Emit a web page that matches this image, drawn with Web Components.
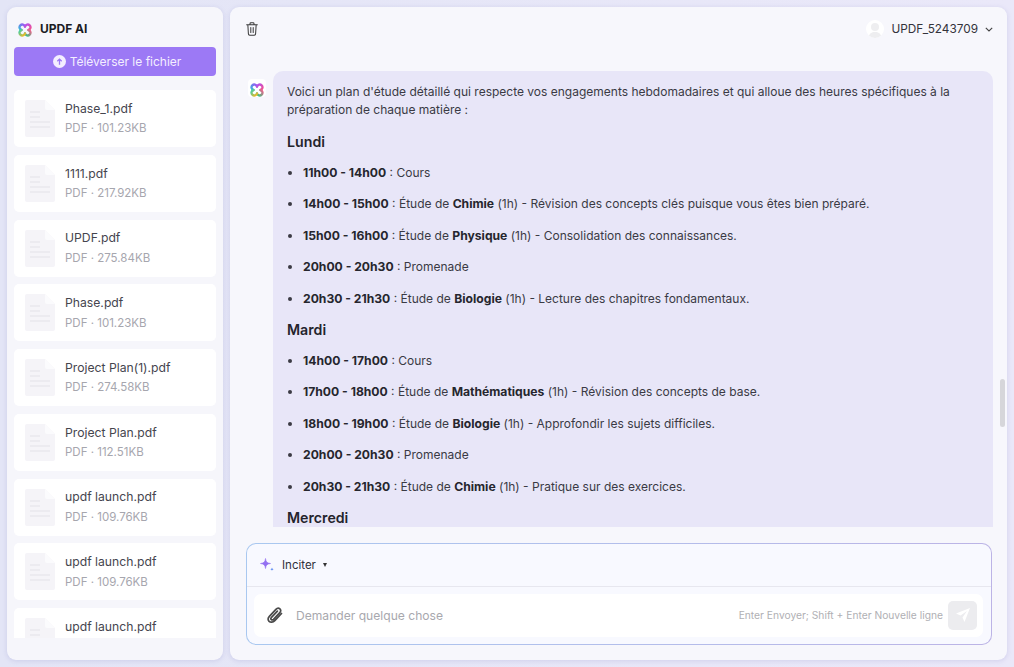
<!DOCTYPE html>
<html lang="fr">
<head>
<meta charset="utf-8">
<title>UPDF AI</title>
<style>
  html, body { margin: 0; height: 100%; }
  body {
    background: linear-gradient(90deg, #e3e5f6, #eae8f9);
    font-family: Inter, "Noto Sans", sans-serif;
    color: #222;
    overflow: hidden;
  }
</style>
</head>
<body>
<updf-app>
  <updf-sidebar slot="side">
    <file-item name="Phase_1.pdf" size="101.23KB"></file-item>
    <file-item name="1111.pdf" size="217.92KB"></file-item>
    <file-item name="UPDF.pdf" size="275.84KB"></file-item>
    <file-item name="Phase.pdf" size="101.23KB"></file-item>
    <file-item name="Project Plan(1).pdf" size="274.58KB"></file-item>
    <file-item name="Project Plan.pdf" size="112.51KB"></file-item>
    <file-item name="updf launch.pdf" size="109.76KB"></file-item>
    <file-item name="updf launch.pdf" size="109.76KB"></file-item>
    <file-item name="updf launch.pdf" size="109.76KB"></file-item>
  </updf-sidebar>
  <chat-panel slot="main">
    <chat-message>
      <p>Voici un plan d'étude détaillé qui respecte vos engagements hebdomadaires et qui alloue des heures spécifiques à la préparation de chaque matière :</p>
      <h3>Lundi</h3>
      <ul>
        <li><b>11h00 - 14h00</b> : Cours</li>
        <li><b>14h00 - 15h00</b> : Étude de <b>Chimie</b> (1h) - Révision des concepts clés puisque vous êtes bien préparé.</li>
        <li><b>15h00 - 16h00</b> : Étude de <b>Physique</b> (1h) - Consolidation des connaissances.</li>
        <li><b>20h00 - 20h30</b> : Promenade</li>
        <li><b>20h30 - 21h30</b> : Étude de <b>Biologie</b> (1h) - Lecture des chapitres fondamentaux.</li>
      </ul>
      <h3>Mardi</h3>
      <ul>
        <li><b>14h00 - 17h00</b> : Cours</li>
        <li><b>17h00 - 18h00</b> : Étude de <b>Mathématiques</b> (1h) - Révision des concepts de base.</li>
        <li><b>18h00 - 19h00</b> : Étude de <b>Biologie</b> (1h) - Approfondir les sujets difficiles.</li>
        <li><b>20h00 - 20h30</b> : Promenade</li>
        <li><b>20h30 - 21h30</b> : Étude de <b>Chimie</b> (1h) - Pratique sur des exercices.</li>
      </ul>
      <h3>Mercredi</h3>
    </chat-message>
  </chat-panel>
</updf-app>

<script>
const LOGO = `
  <svg viewBox="0 0 16 16" width="100%" height="100%" fill="none" stroke-width="2.700" stroke-linecap="round">
    <defs>
      <linearGradient id="lgA" x1="0" y1="1" x2="1" y2="0"><stop offset="0" stop-color="#35b8dc"/><stop offset="1" stop-color="#a052f5"/></linearGradient>
      <linearGradient id="lgB" x1="0" y1="0" x2="1" y2="1"><stop offset="0" stop-color="#b152f0"/><stop offset="1" stop-color="#f5508f"/></linearGradient>
      <linearGradient id="lgC" x1="1" y1="0" x2="0" y2="1"><stop offset="0" stop-color="#f2608c"/><stop offset="1" stop-color="#2fc880"/></linearGradient>
      <linearGradient id="lgD" x1="1" y1="1" x2="0" y2="0"><stop offset="0" stop-color="#f8b81e"/><stop offset="1" stop-color="#3fcfa8"/></linearGradient>
    </defs>
    <path d="M8 4A3.200 3.200 0 1 0 4 8" stroke="url(#lgA)"/>
    <path d="M12 8A3.200 3.200 0 1 0 8 4" stroke="url(#lgB)"/>
    <path d="M8 12A3.200 3.200 0 1 0 12 8" stroke="url(#lgC)"/>
    <path d="M4 8A3.200 3.200 0 1 0 8 12" stroke="url(#lgD)"/>
  </svg>`;

class UpdfApp extends HTMLElement {
  constructor() {
    super();
    this.attachShadow({ mode: 'open' });
    this.shadowRoot.innerHTML = `
      <style>
        :host {
          display: grid;
          grid-template-columns: 216px 777px;
          gap: 7px;
          padding: 7px;
          height: 667px;
          box-sizing: border-box;
        }
        ::slotted(*) { min-height: 0; }
      </style>
      <slot name="side"></slot>
      <slot name="main"></slot>
    `;
  }
}

class UpdfSidebar extends HTMLElement {
  constructor() {
    super();
    this.attachShadow({ mode: 'open' });
    this.shadowRoot.innerHTML = `
      <style>
        :host {
          display: flex;
          flex-direction: column;
          background: #f6f6fb;
          border-radius: 9px;
          box-shadow: 0 1px 5px rgba(120, 120, 190, .22);
          padding: 0 7px 22px;
          overflow: hidden;
        }
        header {
          display: flex;
          align-items: center;
          gap: 8px;
          height: 40px;
          padding: 2px 0 0 4px;
          box-sizing: border-box;
          flex: none;
        }
        .logo { width: 14px; height: 14px; }
        h1 { margin: 0; font-size: 12px; font-weight: 700; color: #1c1c24; }
        button {
          flex: none;
          height: 29px;
          border: 0;
          border-radius: 4px;
          background: #9c79f5;
          color: #f4efff;
          font: 400 12px/27px Inter, sans-serif;
          display: flex;
          align-items: center;
          justify-content: center;
          gap: 4px;
          padding: 0 0 1px 4px;
        }
        button svg { width: 13px; height: 13px; }
        .list {
          margin-top: 14px;
          flex: 1;
          min-height: 0;
          overflow: hidden;
          display: flex;
          flex-direction: column;
          gap: 7.75px;
        }
      </style>
      <header><span class="logo">${LOGO}</span><h1>UPDF AI</h1></header>
      <button>
        <svg viewBox="0 0 13 13"><circle cx="6.5" cy="6.5" r="6.500" fill="#f4efff"/><path d="M6.500 9.800V4.200M4.300 6.200l2.200-2.100 2.200 2.100" fill="none" stroke="#9c79f5" stroke-width="1.300"/></svg>
        Téléverser le fichier
      </button>
      <div class="list"><slot></slot></div>
    `;
  }
}

class FileItem extends HTMLElement {
  constructor() {
    super();
    this.attachShadow({ mode: 'open' });
  }

  connectedCallback() {
    const name = this.getAttribute('name');
    const size = this.getAttribute('size');
    this.shadowRoot.innerHTML = `
      <style>
        :host {
          display: flex;
          flex: none;
          align-items: center;
          height: 57px;
          background: #fff;
          border-radius: 5px;
          padding-left: 11px;
          box-sizing: border-box;
        }
        svg { width: 30px; height: 37px; margin-right: 10px; flex: none; }
        .text { display: flex; flex-direction: column; gap: 5.5px; }
        .name { font-size: 12.200px; line-height: 15px; color: #45454e; }
        .size { font-size: 11.500px; line-height: 15px; color: #a6a6ae; }
      </style>
      <svg viewBox="0 0 30 37">
        <path d="M2 0h18l10 10v25a2 2 0 0 1-2 2H2a2 2 0 0 1-2-2V2a2 2 0 0 1 2-2z" fill="#f5f4f8"/>
        <path d="M20 0l10 10h-8a2 2 0 0 1-2-2z" fill="#fbfbfd"/>
        <path d="M5 12h10M5 17h10M5 22h20M5 27h20" stroke="#e9e8ed" stroke-width="1.500"/>
      </svg>
      <div class="text">
        <span class="name">${name}</span>
        <span class="size">PDF · ${size}</span>
      </div>
    `;
  }
}

class ChatPanel extends HTMLElement {
  constructor() {
    super();
    this.attachShadow({ mode: 'open' });
    this.shadowRoot.innerHTML = `
      <style>
        :host {
          display: flex;
          flex-direction: column;
          background: #f7f7fc;
          border-radius: 9px;
          box-shadow: 0 1px 5px rgba(120, 120, 190, .22);
          overflow: hidden;
        }
        .top {
          flex: none;
          height: 44px;
          display: flex;
          align-items: center;
          justify-content: space-between;
          padding: 0 14px 0 16px;
        }
        .top svg.trash { width: 12px; height: 14px; }
        .user {
          display: flex;
          align-items: center;
          font-size: 11.800px;
          color: #33333b;
        }
        .avatar {
          width: 18px;
          height: 18px;
          border-radius: 50%;
          background: #fff;
          margin-right: 7px;
          overflow: hidden;
        }
        .avatar svg { display: block; }
        .chev { width: 8px; height: 5px; margin-left: 7px; }
        .scroll {
          position: relative;
          flex: 1;
          min-height: 0;
          padding: 20px 0 0 18px;
          overflow: hidden;
        }
        .thumb {
          position: absolute;
          left: 770px;
          top: 328px;
          width: 5px;
          height: 48px;
          border-radius: 3px;
          background: #d6d6da;
        }
      </style>
      <div class="top">
        <svg class="trash" viewBox="0 0 13 15" fill="none" stroke="#3a3a3a" stroke-width="1.100" stroke-linecap="round" stroke-linejoin="round">
          <path d="M.7 3h11.600M4.300 3V1.800q0-1 1-1h2.400q1 0 1 1V3M2 3l.6 9.800q.1 1.400 1.400 1.400h5q1.300 0 1.400-1.400L11 3M5.200 6v5.400M7.800 6v5.400"/>
        </svg>
        <div class="user">
          <span class="avatar"><svg viewBox="0 0 18 18" width="18" height="18"><circle cx="9" cy="7" r="4" fill="#eeeef0"/><path d="M2.500 18c.5-4.500 3-6 6.500-6s6 1.500 6.500 6z" fill="#eeeef0"/></svg></span>
          UPDF_5243709
          <svg class="chev" viewBox="0 0 8 5" fill="none" stroke="#444" stroke-width="1.100"><path d="M.8.8 4 4 7.200.8"/></svg>
        </div>
      </div>
      <div class="scroll">
        <slot></slot>
        <div class="thumb"></div>
      </div>
      <chat-input></chat-input>
    `;
  }
}

class ChatMessage extends HTMLElement {
  constructor() {
    super();
    this.attachShadow({ mode: 'open' });
    this.shadowRoot.innerHTML = `
      <style>
        :host { display: flex; align-items: flex-start; gap: 7px; }
        .avatar {
          flex: none;
          width: 18px;
          height: 18px;
          margin-top: 8px;
          padding: 2px;
          box-sizing: border-box;
          background: #fff;
          border-radius: 4px;
        }
        .bubble {
          width: 720px;
          box-sizing: border-box;
          background: #e8e6f8;
          border-radius: 10px 10px 0 0;
          padding: 12px 14px 20px;
          font-size: 12px;
          line-height: 18px;
          color: #3a3a44;
        }
        ::slotted(p) { margin: 0 0 14px; }
        ::slotted(h3) {
          margin: 0 0 12.500px;
          font-size: 14.200px;
          line-height: 18px;
          font-weight: 600;
          color: #24242c;
        }
        ::slotted(ul) { margin: 0 0 2.500px; padding-left: 16px; }
      </style>
      <div class="avatar">${LOGO}</div>
      <div class="bubble"><slot></slot></div>
    `;
  }
}

class ChatInput extends HTMLElement {
  constructor() {
    super();
    this.attachShadow({ mode: 'open' });
    this.shadowRoot.innerHTML = `
      <style>
        :host {
          display: block;
          flex: none;
          height: 102px;
          margin: 16px 15px 15px 16px;
          box-sizing: border-box;
          border: 1px solid transparent;
          border-radius: 10px;
          background: linear-gradient(#f8f9ff, #f8f9ff) padding-box, linear-gradient(90deg, #a9c8f0, #bcb4e6) border-box;
          overflow: hidden;
        }
        .prompt {
          height: 42.500px;
          display: flex;
          align-items: center;
          padding-left: 13px;
          border-bottom: 1px solid #e7e7ef;
          font-size: 11.500px;
          color: #30303a;
          box-sizing: border-box;
        }
        .prompt svg.spark { width: 15px; height: 14px; margin-right: 7px; }
        .caret { width: 0; height: 0; margin-left: 7px; border: 2.500px solid transparent; border-top: 4px solid #333; border-bottom: 0; }
        .box {
          height: 43px;
          margin: 7px 8px 0 7px;
          display: flex;
          align-items: center;
          background: #fff;
          border-radius: 7px;
          padding: 0 6px 0 13px;
        }
        .clip { width: 16px; height: 18px; margin-right: 13px; flex: none; }
        .ph { flex: 1; font-size: 12.100px; color: #a8a8ae; }
        .hint { font-size: 10.250px; color: #b0b0b4; margin-right: 5px; }
        .send {
          width: 29px;
          height: 29px;
          border-radius: 5px;
          background: #ececef;
          display: flex;
          align-items: center;
          justify-content: center;
        }
        .send svg { width: 16px; height: 16px; }
      </style>
      <div class="prompt">
        <svg class="spark" viewBox="0 0 15 14">
          <path d="M5.500 .5C6 4 7 5 10.500 5.500 7 6 6 7 5.500 10.500 5 7 4 6 .5 5.500 4 5 5 4 5.500 .5z" fill="#9470f2" stroke="#9470f2" stroke-width=".6" stroke-linejoin="round"/>
          <path d="M12 9.500c.2 1.100.6 1.500 1.700 1.700-1.100.2-1.500.6-1.700 1.700-.2-1.100-.6-1.500-1.700-1.700 1.100-.2 1.500-.6 1.700-1.700z" fill="#4f82f0"/>
        </svg>
        Inciter
        <span class="caret"></span>
      </div>
      <div class="box">
        <svg class="clip" viewBox="0 0 16 18" fill="none" stroke="#4a4a4a" stroke-width="1.700" stroke-linecap="round">
          <path d="M14.500 7.500 7.800 14.600c-1.900 2-4.400 2-5.700.7-1.300-1.400-1.100-3.500.5-5.200l6.300-6.700c1.200-1.300 2.900-1.500 4-.5 1.100 1.100.9 2.700-.3 4L6.500 13.300c-.7.700-1.600.8-2.200.3-.6-.6-.5-1.500.2-2.200l5.900-6.300"/>
        </svg>
        <span class="ph">Demander quelque chose</span>
        <span class="hint">Enter Envoyer; Shift + Enter Nouvelle ligne</span>
        <span class="send"><svg viewBox="0 0 16 16"><path d="M15 1 1 6.500l4.500 2L12 4 7.500 10.500l2 4.500z" fill="#fff"/></svg></span>
      </div>
    `;
  }
}

// li and b sit deeper than ::slotted can reach, so they get a small page sheet
const listStyle = document.createElement('style');
listStyle.textContent = `
  chat-message li { margin-bottom: 13.5px; }
  chat-message b { font-size: 12.15px; font-weight: 700; color: #26262e; }
`;
document.head.appendChild(listStyle);

customElements.define('updf-app', UpdfApp);
customElements.define('updf-sidebar', UpdfSidebar);
customElements.define('file-item', FileItem);
customElements.define('chat-panel', ChatPanel);
customElements.define('chat-message', ChatMessage);
customElements.define('chat-input', ChatInput);
</script>
</body>
</html>
